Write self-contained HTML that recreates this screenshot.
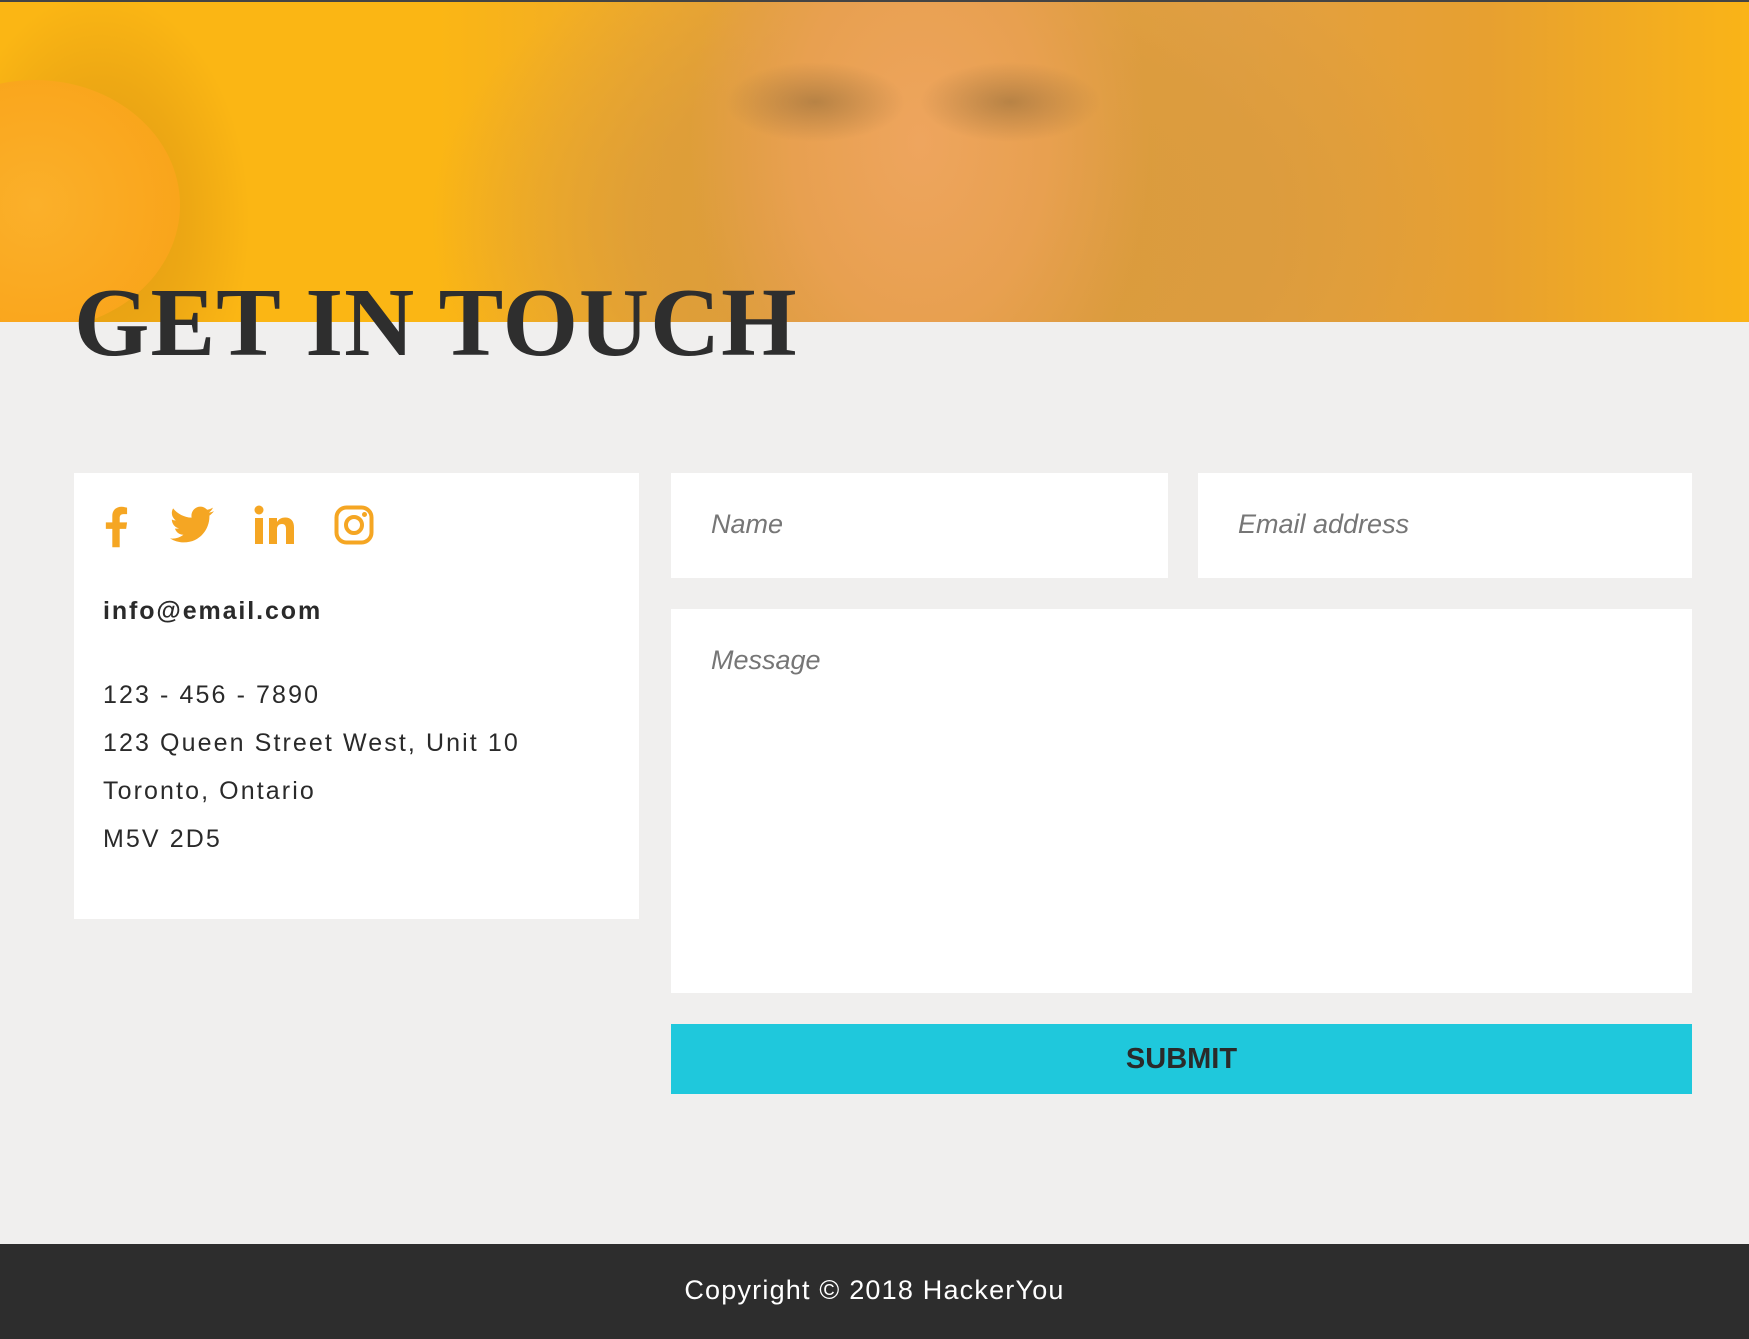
<!DOCTYPE html>
<html><head><meta charset="utf-8"><style>
*{margin:0;padding:0;box-sizing:border-box}
body{width:1749px;height:1339px;background:#f0efee;font-family:"Liberation Sans",sans-serif;position:relative;overflow:hidden}
.hero{position:absolute;left:0;top:0;width:1749px;height:322px;border-top:2px solid #444;
background:
radial-gradient(ellipse 90px 40px at 815px 100px,rgba(150,110,60,.6),rgba(0,0,0,0)),
radial-gradient(ellipse 90px 40px at 1010px 100px,rgba(150,110,60,.6),rgba(0,0,0,0)),
radial-gradient(ellipse 230px 330px at 920px 140px,#eea55e 0,#e8a050 55%,rgba(232,160,80,0) 100%),
radial-gradient(ellipse 520px 320px at 950px 220px,#d99a3c 0,rgba(217,154,60,.7) 60%,rgba(217,154,60,0) 100%),
radial-gradient(ellipse 150px 230px at 100px 220px,#e09a14 0,rgba(224,154,20,.5) 60%,rgba(224,154,20,0) 100%),
linear-gradient(90deg,#fbb614 0,#fbb614 25%,#e7a33a 45%,#e2a044 70%,#e7a030 85%,#fab417 100%);}
.orange{position:absolute;left:-110px;top:80px;width:290px;height:250px;border-radius:50%;background:radial-gradient(circle,#fbb02a 0,#f9a41a 80%,#fbc34c 88%,#f8a51c 100%)}
h1{position:absolute;left:74px;top:270px;font-family:"Liberation Serif",serif;font-weight:bold;font-size:97px;color:#2e2e2e;letter-spacing:1px;line-height:1.1;white-space:nowrap}
.card{position:absolute;left:74px;top:473px;width:565px;height:446px;background:#fff}
.icons svg{position:absolute;top:505px}
.em{position:absolute;left:103px;top:597px;font-size:25px;font-weight:bold;color:#2a2a2a;letter-spacing:1.9px}
.ln{position:absolute;left:103px;font-size:25px;color:#2a2a2a;letter-spacing:2.1px}
.inp{position:absolute;background:#fff;color:#767676;font-style:italic;font-size:27px;padding-left:40px}
.btn{position:absolute;left:671px;top:1024px;width:1021px;height:70px;background:#1fc8dc;color:#2a2a2a;font-weight:bold;font-size:29px;text-align:center;line-height:70px}
footer{position:absolute;left:0;top:1244px;width:1749px;height:95px;background:#2d2d2d;color:#fff;font-size:27px;letter-spacing:1.2px;text-align:center;line-height:92px}
</style></head><body>
<div class="hero"></div>
<div class="orange"></div>
<div style="position:absolute;left:0;top:322px;width:1749px;height:20px;background:#f0efee"></div>
<h1>GET IN TOUCH</h1>
<div class="card"></div>
<div class="icons">
<svg style="left:104px" width="24" height="44" viewBox="0 0 26 44"><path d="M17 44V24h7l1-7h-8v-5c0-2 1-4 4-4h4V1c-1 0-3-1-6-1-6 0-10 4-10 10v7H2v7h7v20z" fill="#f5a623"/></svg>
<svg style="left:170px" width="44" height="40" viewBox="0 0 24 20"><path d="M24 2.4c-.9.4-1.8.7-2.8.8 1-.6 1.8-1.6 2.2-2.7-1 .6-2 1-3.1 1.2C19.3.7 18 0 16.6 0c-2.7 0-4.9 2.2-4.9 4.9 0 .4 0 .8.1 1.1C7.7 5.8 4.1 3.9 1.7.9c-.4.7-.7 1.6-.7 2.5 0 1.7.9 3.2 2.2 4.1-.8 0-1.6-.2-2.2-.6v.1c0 2.4 1.7 4.4 3.9 4.8-.4.1-.8.2-1.3.2-.3 0-.6 0-.9-.1.6 2 2.4 3.4 4.6 3.4-1.7 1.300-3.8 2.1-6.1 2.1-.4 0-.8 0-1.2-.1 2.2 1.4 4.8 2.2 7.5 2.2 9.1 0 14-7.5 14-14v-.6c1-.7 1.8-1.6 2.5-2.5z" fill="#f5a623"/></svg>
<svg style="left:254px" width="42" height="40" viewBox="0 0 42 40"><circle cx="5" cy="5" r="4.5" fill="#f5a623"/><rect x="1" y="13" width="8" height="26" fill="#f5a623"/><path d="M15 13h8v4c1.5-3 5-4.5 8-4.5 6 0 9 3.5 9 10V39h-8V24c0-3-1-5-4-5s-5 2-5 5v15h-8z" fill="#f5a623"/></svg>
<svg style="left:334px" width="40" height="40" viewBox="0 0 40 40"><rect x="2.5" y="2.5" width="35" height="35" rx="10" fill="none" stroke="#f5a623" stroke-width="4"/><circle cx="20" cy="20" r="8" fill="none" stroke="#f5a623" stroke-width="4"/><circle cx="30.5" cy="9.5" r="2.5" fill="#f5a623"/></svg>
</div>
<div class="em">info@email.com</div>
<div class="ln" style="top:681px">123 - 456 - 7890</div>
<div class="ln" style="top:729px">123 Queen Street West, Unit 10</div>
<div class="ln" style="top:777px">Toronto, Ontario</div>
<div class="ln" style="top:825px">M5V 2D5</div>
<div class="inp" style="left:671px;top:473px;width:497px;height:105px;line-height:103px">Name</div>
<div class="inp" style="left:1198px;top:473px;width:494px;height:105px;line-height:103px">Email address</div>
<div class="inp" style="left:671px;top:609px;width:1021px;height:384px;padding-top:36px">Message</div>
<div class="btn">SUBMIT</div>
<footer>Copyright © 2018 HackerYou</footer>
</body></html>
